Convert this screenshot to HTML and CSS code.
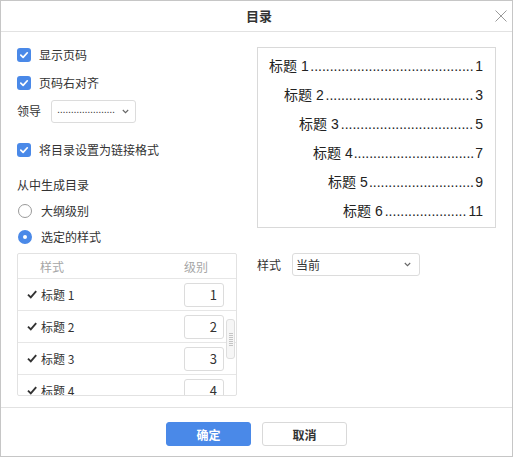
FILE: index.html
```html
<!DOCTYPE html>
<html lang="zh">
<head>
<meta charset="utf-8">
<title>目录</title>
<link rel="stylesheet" href="styles.css">
</head>
<body>
<div class="dialog">
  <div class="header">
    <div class="header-side"></div>
    <div class="title">目录</div>
    <div class="header-side close-wrap">
      <svg class="close" width="12" height="12" viewBox="0 0 12 12"><path d="M0.5 0.5L11.5 11.5M11.5 0.5L0.5 11.5" stroke="#9a9a9a" stroke-width="1" fill="none"/></svg>
    </div>
  </div>
  <div class="body">
    <div class="left">
      <div class="row">
        <span class="cb"><svg width="10" height="10" viewBox="0 0 10 10"><path d="M1.8 5.2L4.1 7.4L8.3 2.8" stroke="#fff" stroke-width="1.7" fill="none" stroke-linecap="round" stroke-linejoin="round"/></svg></span>
        <span>显示页码</span>
      </div>
      <div class="row">
        <span class="cb"><svg width="10" height="10" viewBox="0 0 10 10"><path d="M1.8 5.2L4.1 7.4L8.3 2.8" stroke="#fff" stroke-width="1.7" fill="none" stroke-linecap="round" stroke-linejoin="round"/></svg></span>
        <span>页码右对齐</span>
      </div>
      <div class="row">
        <span class="leader-label">领导</span>
        <div class="select leader-select">
          <span class="select-dots">.....................</span>
          <svg class="chev" width="7" height="5" viewBox="0 0 7 5"><path d="M0.8 1L3.5 3.7L6.2 1" stroke="#666" stroke-width="1.1" fill="none"/></svg>
        </div>
      </div>
      <div class="row row-gap">
        <span class="cb"><svg width="10" height="10" viewBox="0 0 10 10"><path d="M1.8 5.2L4.1 7.4L8.3 2.8" stroke="#fff" stroke-width="1.7" fill="none" stroke-linecap="round" stroke-linejoin="round"/></svg></span>
        <span>将目录设置为链接格式</span>
      </div>
      <div class="row section">从中生成目录</div>
      <div class="row radio-row"><span class="radio"></span><span>大纲级别</span></div>
      <div class="row radio-row"><span class="radio on"></span><span>选定的样式</span></div>
      <div class="table">
        <div class="thead">
          <span class="th-name">样式</span>
          <span class="th-level">级别</span>
        </div>
        <div class="tbody">
          <div class="tr">
            <svg class="check" width="10" height="9" viewBox="0 0 10 9"><path d="M1 4.6L3.8 7.4L9.2 1.2" stroke="#333" stroke-width="1.9" fill="none"/></svg>
            <span class="name">标题 1</span>
            <span class="lvl">1</span>
          </div>
          <div class="tr">
            <svg class="check" width="10" height="9" viewBox="0 0 10 9"><path d="M1 4.6L3.8 7.4L9.2 1.2" stroke="#333" stroke-width="1.9" fill="none"/></svg>
            <span class="name">标题 2</span>
            <span class="lvl">2</span>
          </div>
          <div class="tr">
            <svg class="check" width="10" height="9" viewBox="0 0 10 9"><path d="M1 4.6L3.8 7.4L9.2 1.2" stroke="#333" stroke-width="1.9" fill="none"/></svg>
            <span class="name">标题 3</span>
            <span class="lvl">3</span>
          </div>
          <div class="tr">
            <svg class="check" width="10" height="9" viewBox="0 0 10 9"><path d="M1 4.6L3.8 7.4L9.2 1.2" stroke="#333" stroke-width="1.9" fill="none"/></svg>
            <span class="name">标题 4</span>
            <span class="lvl">4</span>
          </div>
          <div class="scrollbar"><div class="grip"></div></div>
        </div>
      </div>
    </div>
    <div class="right">
      <div class="preview">
        <div class="line l1"><span class="head">标题 1</span><span class="leader">..........................................</span><span class="pg">1</span></div>
        <div class="line l2"><span class="head">标题 2</span><span class="leader">......................................</span><span class="pg">3</span></div>
        <div class="line l3"><span class="head">标题 3</span><span class="leader">..................................</span><span class="pg">5</span></div>
        <div class="line l4"><span class="head">标题 4</span><span class="leader">...............................</span><span class="pg">7</span></div>
        <div class="line l5"><span class="head">标题 5</span><span class="leader">...........................</span><span class="pg">9</span></div>
        <div class="line l6"><span class="head">标题 6</span><span class="leader">.....................</span><span class="pg">11</span></div>
      </div>
      <div class="style-row">
        <span class="style-label">样式</span>
        <div class="select style-select">
          <span class="select-text">当前</span>
          <svg class="chev" width="7" height="5" viewBox="0 0 7 5"><path d="M0.8 1L3.5 3.7L6.2 1" stroke="#666" stroke-width="1.1" fill="none"/></svg>
        </div>
      </div>
    </div>
  </div>
  <div class="footer">
    <button class="btn primary">确定</button>
    <button class="btn">取消</button>
  </div>
</div>
</body>
</html>
```

FILE: styles.css
```css
* {
  box-sizing: border-box;
  margin: 0;
  padding: 0;
}

body {
  margin: 0;
  background: #fff;
  font-family: "Noto Sans CJK SC", "Liberation Sans", sans-serif;
  font-size: 12px;
  color: #333;
}

.dialog {
  width: 513px;
  height: 457px;
  border: 1px solid #c6c6c6;
  display: flex;
  flex-direction: column;
  background: #fff;
}

.header {
  height: 31px;
  flex: 0 0 31px;
  border-bottom: 1px solid #e2e2e2;
  display: flex;
  align-items: center;
}

.header-side {
  width: 30px;
  height: 30px;
}

.close-wrap {
  display: flex;
  align-items: center;
  justify-content: flex-end;
  padding-right: 5px;
}

.close {
  display: block;
}

.title {
  flex: 1;
  text-align: center;
  font-size: 13px;
  font-weight: bold;
  color: #333;
  line-height: 30px;
  padding-left: 5px;
}

.body {
  flex: 1;
  display: flex;
  padding: 0 16px;
}

.left {
  width: 220px;
  padding-top: 9px;
  display: flex;
  flex-direction: column;
}

.row {
  height: 28px;
  flex: 0 0 auto;
  display: flex;
  align-items: center;
  line-height: 16px;
  white-space: nowrap;
}

.row-gap {
  margin-top: 11px;
}

.section {
  height: 26px;
  margin-top: 8px;
}

.radio-row {
  height: 26px;
}

.cb {
  width: 14px;
  height: 14px;
  border-radius: 3px;
  background: #4a89e8;
  display: flex;
  align-items: center;
  justify-content: center;
  margin-right: 8px;
}

.cb svg {
  display: block;
}

.radio {
  width: 14px;
  height: 14px;
  border-radius: 50%;
  border: 1px solid #9a9a9a;
  margin: 0 9px 0 1px;
  background: #fff;
}

.radio.on {
  border: 5px solid #4a89e8;
}

.leader-label {
  width: 24px;
  margin-right: 10px;
}

.select {
  height: 23px;
  border: 1px solid #dcdcdc;
  border-radius: 3px;
  display: flex;
  align-items: center;
  background: #fff;
}

.leader-select {
  width: 85px;
  padding: 0 6px 0 5px;
  justify-content: space-between;
}

.select-dots {
  white-space: nowrap;
  font-family: "Liberation Sans", sans-serif;
  font-size: 11px;
  letter-spacing: -0.3px;
  color: #444;
  line-height: 14px;
  position: relative;
  top: -2px;
}

.chev {
  display: block;
  flex: 0 0 auto;
}

.table {
  margin-top: 3px;
  width: 220px;
  border: 1px solid #e2e2e2;
  border-radius: 2px;
}

.thead {
  height: 25px;
  border-bottom: 1px solid #e6e6e6;
  display: flex;
  align-items: center;
  color: #a6a6a6;
}

.th-name {
  flex: 1;
  padding-left: 22px;
}

.th-level {
  width: 52px;
}

.tbody {
  height: 116px;
  overflow: hidden;
  position: relative;
}

.tr {
  height: 32px;
  border-bottom: 1px solid #e6e6e6;
  display: flex;
  align-items: center;
}

.check {
  display: block;
  margin-left: 9px;
  margin-right: 4px;
}

.name {
  flex: 1;
}

.lvl {
  width: 40px;
  height: 24px;
  border: 1px solid #dcdcdc;
  border-radius: 3px;
  margin-right: 12px;
  text-align: right;
  padding-right: 6px;
  line-height: 22px;
  font-size: 13px;
}

.scrollbar {
  position: absolute;
  top: 40px;
  right: 1px;
  width: 9px;
  height: 40px;
  border: 1px solid #dedede;
  border-radius: 3px;
  background: #f6f6f6;
  display: flex;
  align-items: center;
  justify-content: center;
}

.grip {
  width: 4px;
  height: 13px;
  background: repeating-linear-gradient(to bottom, #c4c4c4 0, #c4c4c4 1px, transparent 1px, transparent 2px);
}

.right {
  width: 239px;
  margin-left: 20px;
  padding-top: 15px;
  display: flex;
  flex-direction: column;
}

.preview {
  height: 181px;
  border: 1px solid #d9d9d9;
  padding: 4px 12px 0 11px;
  font-family: "Liberation Sans", "Noto Sans CJK SC", sans-serif;
  font-size: 14px;
  color: #222;
}

.line {
  display: flex;
  height: 29px;
  line-height: 29px;
  white-space: nowrap;
}

.head {
  flex: 0 0 auto;
}

.leader {
  flex: 0 1 auto;
  overflow: hidden;
  white-space: nowrap;
  margin-left: auto;
}

.pg {
  flex: 0 0 auto;
  margin-left: auto;
}

.l2 { padding-left: 15px; }
.l3 { padding-left: 30px; }
.l4 { padding-left: 44px; }
.l5 { padding-left: 59px; }
.l6 { padding-left: 74px; }

.style-row {
  margin-top: 25px;
  height: 23px;
  display: flex;
  align-items: center;
}

.style-label {
  width: 24px;
  margin-right: 11px;
}

.style-select {
  width: 128px;
  padding: 0 8px 0 3px;
}

.select-text {
  flex: 1;
}

.footer {
  height: 49px;
  flex: 0 0 49px;
  border-top: 1px solid #e2e2e2;
  display: flex;
  justify-content: center;
  gap: 11px;
  padding-top: 14px;
}

.btn {
  width: 85px;
  height: 24px;
  border-radius: 3px;
  border: 1px solid #d9d9d9;
  background: #fff;
  font-family: "Noto Sans CJK SC", sans-serif;
  font-size: 12px;
  font-weight: bold;
  color: #333;
}

.btn.primary {
  background: #4a89e8;
  border-color: #4a89e8;
  color: #fff;
}
```
